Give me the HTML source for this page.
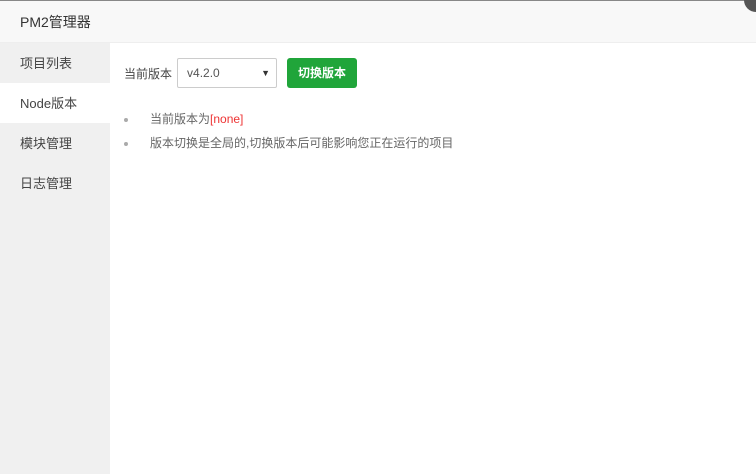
<!DOCTYPE html>
<html><head><meta charset="utf-8"><style>
*{margin:0;padding:0;box-sizing:border-box}
body{width:756px;height:474px;background:#fff;font-family:"Liberation Sans","Noto Sans CJK SC",sans-serif;position:relative;overflow:hidden;color:#555}
.top{position:absolute;left:0;top:0;width:756px;height:1px;background:#888}
.hd{position:absolute;left:0;top:1px;width:756px;height:42px;background:#f8f8f8;border-bottom:1px solid #eee;font-size:14px;color:#333;line-height:42px;padding-left:20px}
.close{position:absolute;right:-12px;top:-12px;width:24px;height:24px;border-radius:50%;background:#555}
.sb{position:absolute;left:0;top:43px;width:110px;height:431px;background:#f0f0f0}
.sb div{height:40px;line-height:42px;padding-left:20px;font-size:13px;color:#444}
.sb .on{background:#fff}
.row{position:absolute;left:124px;top:58px;height:30px;display:flex;align-items:center;font-size:12px;color:#444}
.sel{margin-left:5px;width:100px;height:30px;border:1px solid #ccc;border-radius:2px;line-height:28px;padding-left:9px;font-size:12px;color:#555;position:relative;background:#fff}
.sel:after{content:"▼";position:absolute;right:6px;top:0;font-size:9px;color:#333}
.btn{margin-left:10px;width:70px;height:30px;background:#20a53a;border-radius:3px;color:#fff;font-size:12px;font-weight:bold;text-align:center;line-height:30px}
ul{position:absolute;left:124px;top:111px;list-style:none;font-size:12px;color:#666}
li{height:24px;line-height:16px;position:relative;padding-left:26px}
li:before{content:"";position:absolute;left:0;top:7px;width:4px;height:4px;border-radius:50%;background:#aaa}
.r{color:#e33}
</style></head><body>
<div class="top"></div>
<div class="hd">PM2管理器</div>
<div class="close"></div>
<div class="sb"><div>项目列表</div><div class="on">Node版本</div><div>模块管理</div><div>日志管理</div></div>
<div class="row">当前版本<div class="sel">v4.2.0</div><div class="btn">切换版本</div></div>
<ul><li>当前版本为<span class="r">[none]</span></li><li>版本切换是全局的,切换版本后可能影响您正在运行的项目</li></ul>
</body></html>
